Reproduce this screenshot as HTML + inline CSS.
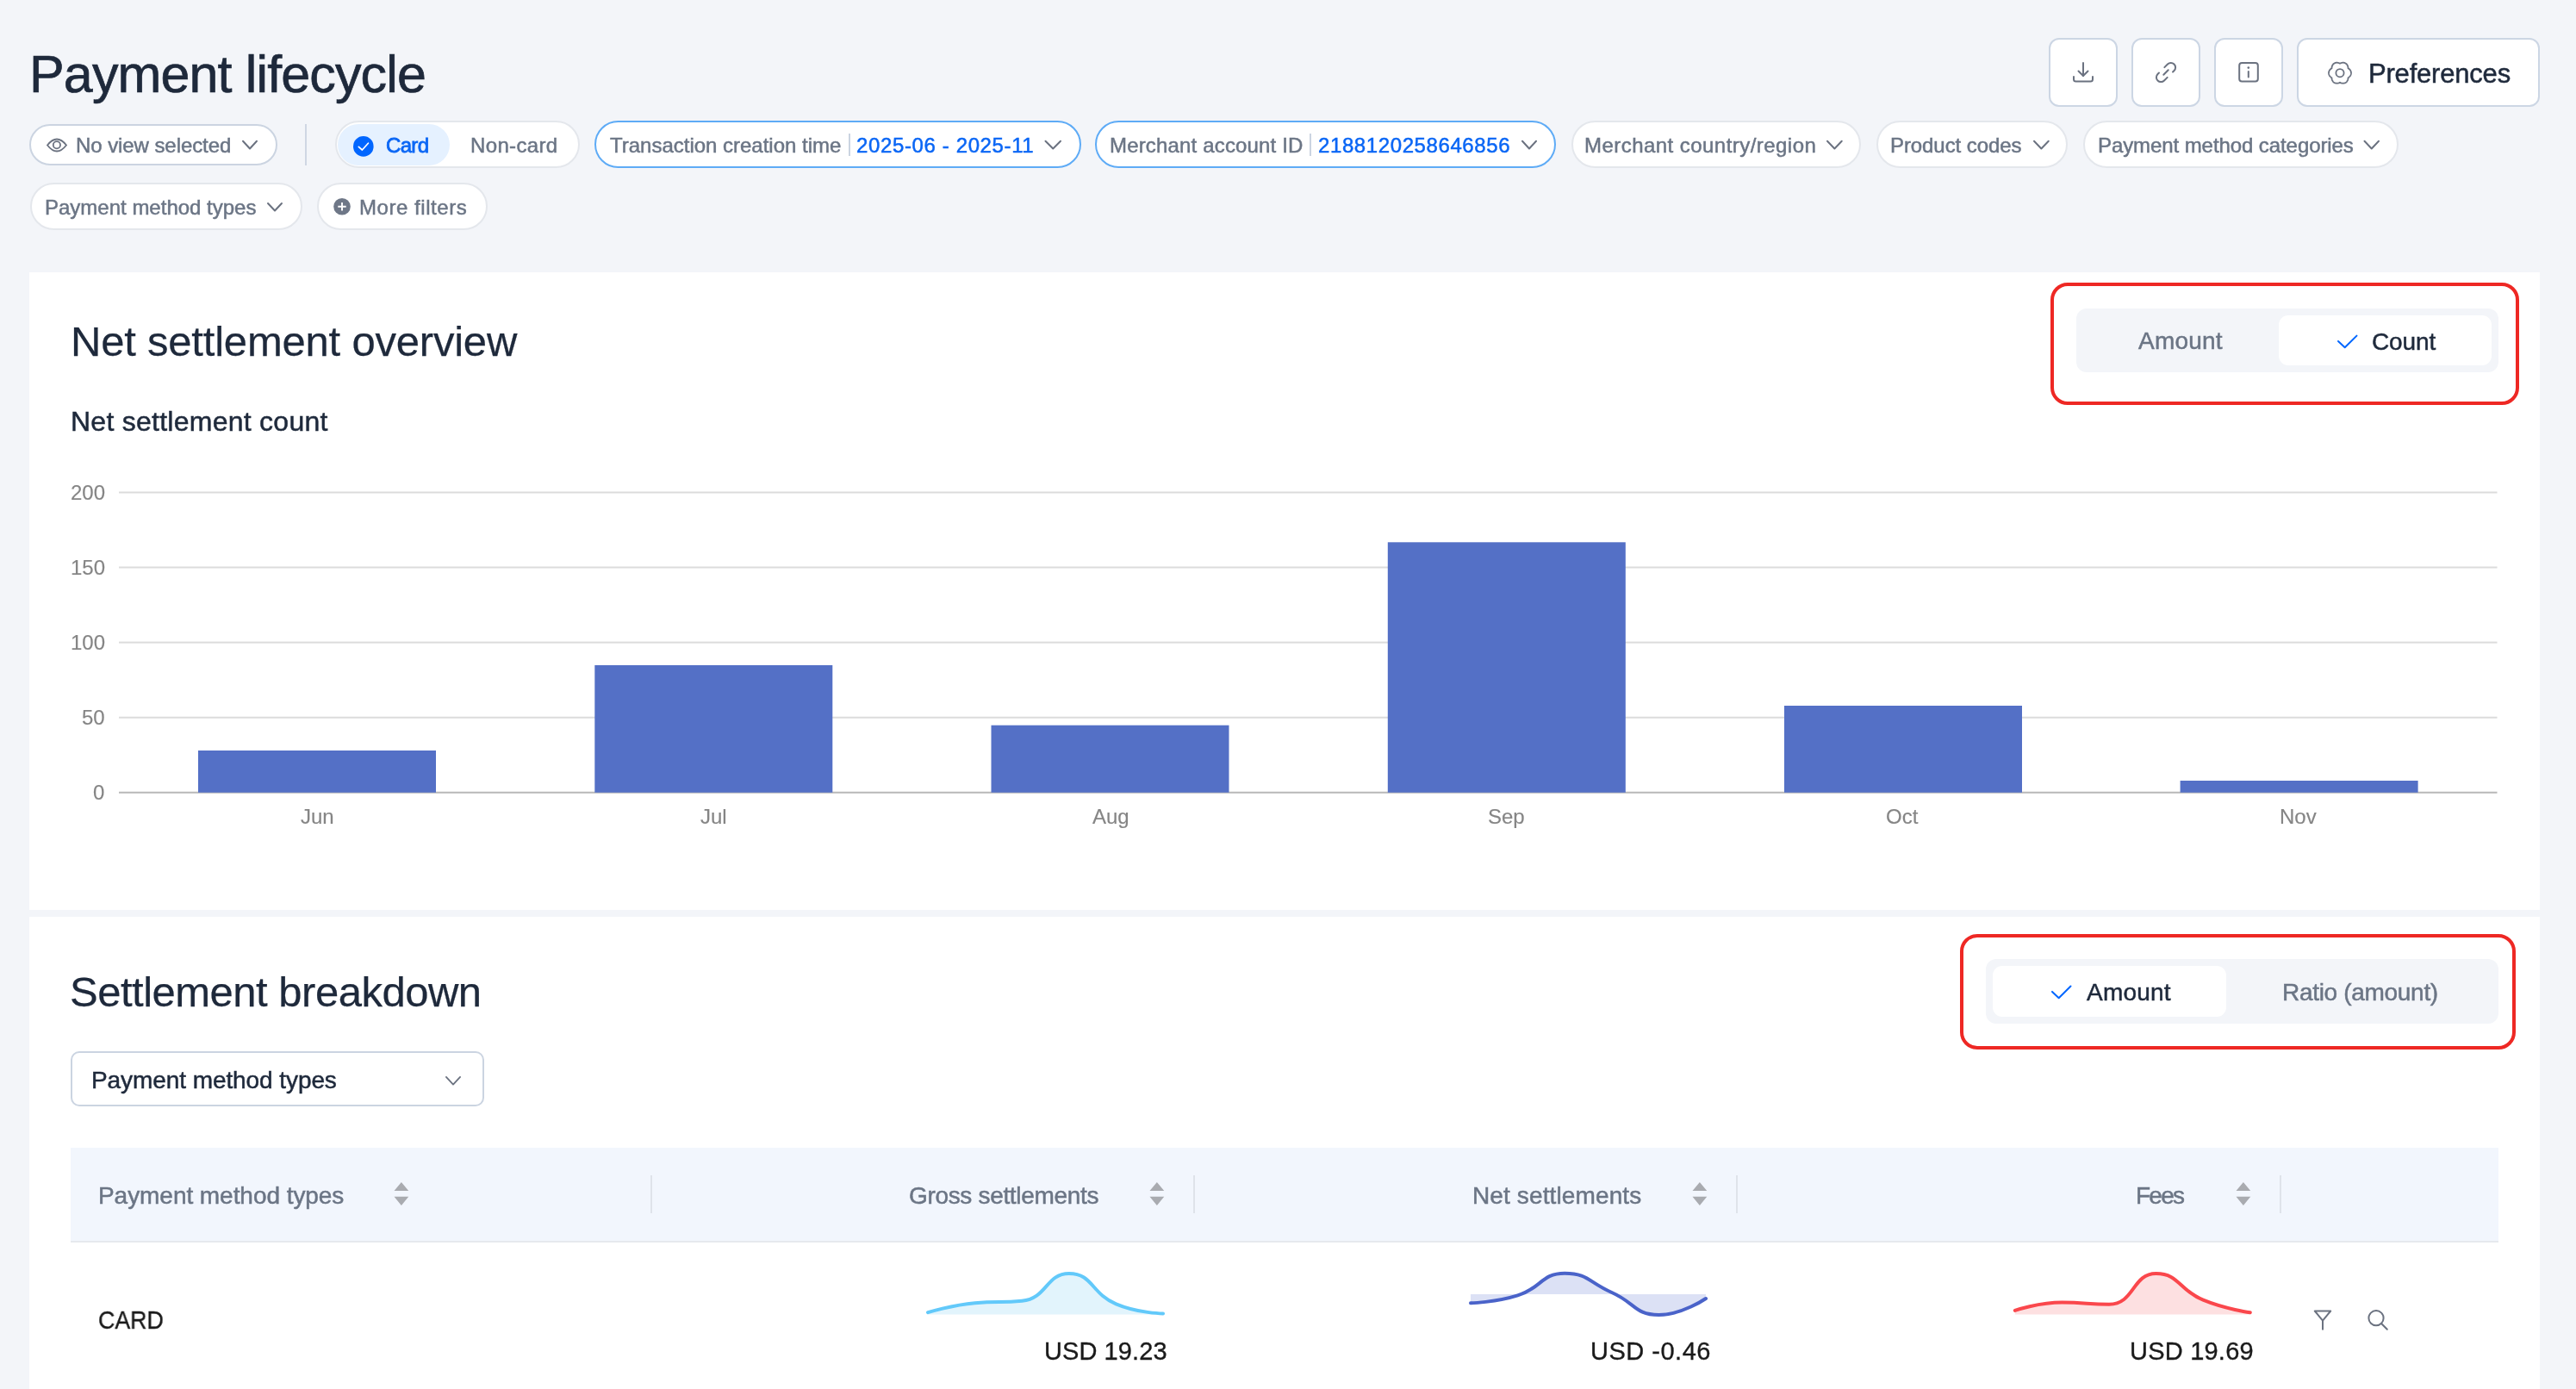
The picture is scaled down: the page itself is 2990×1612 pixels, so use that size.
<!DOCTYPE html>
<html><head><meta charset="utf-8"><title>Payment lifecycle</title>
<style>
html,body{margin:0;padding:0;}
body{width:2990px;height:1612px;position:relative;overflow:hidden;background:#f3f5f9;font-family:"Liberation Sans",sans-serif;}
.t{position:absolute;white-space:nowrap;font-family:"Liberation Sans",sans-serif;will-change:transform;}
.b{position:absolute;box-sizing:border-box;}
svg{position:absolute;left:0;top:0;}
</style></head><body>
<!-- header buttons -->
<div class="b" style="left:2378px;top:44px;width:80px;height:80px;background:#fff;border:2px solid #ccd6e4;border-radius:12px"></div>
<div class="b" style="left:2474px;top:44px;width:80px;height:80px;background:#fff;border:2px solid #ccd6e4;border-radius:12px"></div>
<div class="b" style="left:2570px;top:44px;width:80px;height:80px;background:#fff;border:2px solid #ccd6e4;border-radius:12px"></div>
<div class="b" style="left:2666px;top:44px;width:281.5px;height:80px;background:#fff;border:2px solid #ccd6e4;border-radius:12px"></div>
<!-- filter row 1 -->
<div class="b" style="left:34px;top:144px;width:288px;height:47.6px;background:#fff;border:2px solid #cbd4e1;border-radius:24px"></div>
<div class="b" style="left:354px;top:144px;width:2px;height:48px;background:#cfd7e3"></div>
<div class="b" style="left:388.5px;top:140px;width:284.5px;height:55px;background:#fff;border:2px solid #e4e7ec;border-radius:27.5px"></div>
<div class="b" style="left:391.5px;top:143.5px;width:130.5px;height:48.5px;background:#e5f1ff;border-radius:24px"></div>
<div class="b" style="left:690px;top:140px;width:565px;height:55px;background:#fff;border:2px solid #5eabf6;border-radius:27.5px"></div>
<div class="b" style="left:985px;top:155px;width:2px;height:26px;background:#cbd4e1"></div>
<div class="b" style="left:1271px;top:140px;width:535px;height:55px;background:#fff;border:2px solid #5eabf6;border-radius:27.5px"></div>
<div class="b" style="left:1520px;top:155px;width:2px;height:26px;background:#cbd4e1"></div>
<div class="b" style="left:1823.5px;top:140px;width:336.5px;height:55px;background:#fff;border:2px solid #e4e7ec;border-radius:27.5px"></div>
<div class="b" style="left:2177.5px;top:140px;width:222.5px;height:55px;background:#fff;border:2px solid #e4e7ec;border-radius:27.5px"></div>
<div class="b" style="left:2418px;top:140px;width:366px;height:55px;background:#fff;border:2px solid #e4e7ec;border-radius:27.5px"></div>
<!-- filter row 2 -->
<div class="b" style="left:34.5px;top:212px;width:316px;height:55px;background:#fff;border:2px solid #e4e7ec;border-radius:27.5px"></div>
<div class="b" style="left:367.5px;top:212px;width:198.5px;height:55px;background:#fff;border:2px solid #e4e7ec;border-radius:27.5px"></div>
<!-- cards -->
<div class="b" style="left:34px;top:316px;width:2914px;height:740px;background:#fff"></div>
<div class="b" style="left:34px;top:1064px;width:2914px;height:560px;background:#fff"></div>
<!-- red boxes & segmented -->
<div class="b" style="left:2380px;top:328px;width:543.5px;height:141.5px;border:4px solid #ee2824;border-radius:20px"></div>
<div class="b" style="left:2410px;top:358px;width:490px;height:74px;background:#f3f5f9;border-radius:12px"></div>
<div class="b" style="left:2645px;top:366px;width:247px;height:58px;background:#fff;border-radius:11px"></div>
<div class="b" style="left:2274.5px;top:1084px;width:645.5px;height:133.5px;border:4px solid #ee2824;border-radius:20px"></div>
<div class="b" style="left:2304.5px;top:1113px;width:595.5px;height:74.5px;background:#f3f5f9;border-radius:12px"></div>
<div class="b" style="left:2313px;top:1121px;width:271px;height:59px;background:#fff;border-radius:11px"></div>
<!-- dropdown -->
<div class="b" style="left:82px;top:1220px;width:480px;height:63.5px;background:#fff;border:2px solid #cbd4e1;border-radius:10px"></div>
<!-- table header -->
<div class="b" style="left:82px;top:1332px;width:2818px;height:110px;background:#f2f6fd;border-bottom:2px solid #e6e9ee"></div>
<div class="b" style="left:755px;top:1363.5px;width:2px;height:44px;background:#dfe3ea"></div>
<div class="b" style="left:1385px;top:1363.5px;width:2px;height:44px;background:#dfe3ea"></div>
<div class="b" style="left:2015px;top:1363.5px;width:2px;height:44px;background:#dfe3ea"></div>
<div class="b" style="left:2646px;top:1363.5px;width:2px;height:44px;background:#dfe3ea"></div>
<svg width="2990" height="1612" viewBox="0 0 2990 1612">
<rect x="138" y="570.50" width="2760.5" height="2" fill="#dcdcdc"/><rect x="138" y="657.50" width="2760.5" height="2" fill="#dcdcdc"/><rect x="138" y="744.60" width="2760.5" height="2" fill="#dcdcdc"/><rect x="138" y="831.70" width="2760.5" height="2" fill="#dcdcdc"/><rect x="138" y="918.75" width="2760.5" height="2" fill="#b8b8b8"/><rect x="230" y="871" width="276" height="48.75" fill="#5470c6"/><rect x="690.3" y="772" width="276" height="147.75" fill="#5470c6"/><rect x="1150.5" y="841.7" width="276" height="78.05" fill="#5470c6"/><rect x="1610.8" y="629.3" width="276" height="290.45" fill="#5470c6"/><rect x="2071" y="819" width="276" height="100.75" fill="#5470c6"/><rect x="2530.6" y="906" width="276" height="13.75" fill="#5470c6"/>
<g fill="none" stroke="#6b7280" stroke-width="2" stroke-linecap="round" stroke-linejoin="round"><path d="M2418 73 V88"/><path d="M2412.5 82.5 L2418 88 L2423.5 82.5"/><path d="M2407 89 V92 Q2407 94.5 2409.5 94.5 H2426.5 Q2429 94.5 2429 92 V89"/></g><g fill="none" stroke="#6b7280" stroke-width="1.87" stroke-linecap="round" stroke-linejoin="round" transform="translate(2514 84) rotate(-45) scale(1.07)"><path d="M2.8 -5 H7.6 A5 5 0 0 1 7.6 5 H5.6"/><path d="M-2.8 5 H-7.6 A5 5 0 0 1 -7.6 -5 H-5.6"/><path d="M-3.6 0 H3.6"/></g><g fill="none" stroke="#6b7280" stroke-width="2" stroke-linecap="round"><rect x="2599.2" y="73" width="21.6" height="21.4" rx="3"/><path d="M2609.8 83 V89.5"/></g><circle cx="2609.8" cy="78.6" r="1.3" fill="#6b7280"/><path d="M2729.00 84.70 L2728.98 85.15 L2728.92 85.60 L2728.83 86.05 L2728.70 86.49 L2728.54 86.91 L2728.34 87.32 L2728.12 87.72 L2727.86 88.10 L2727.58 88.46 L2727.28 88.80 L2726.95 89.13 L2726.61 89.43 L2726.26 89.70 L2725.90 89.96 L2725.53 90.20 L2725.51 90.64 L2725.46 91.08 L2725.40 91.53 L2725.31 91.97 L2725.19 92.41 L2725.05 92.85 L2724.88 93.27 L2724.67 93.68 L2724.44 94.08 L2724.18 94.45 L2723.90 94.81 L2723.58 95.14 L2723.25 95.44 L2722.88 95.72 L2722.50 95.96 L2722.10 96.17 L2721.68 96.35 L2721.25 96.49 L2720.81 96.59 L2720.35 96.66 L2719.90 96.70 L2719.44 96.70 L2718.98 96.67 L2718.53 96.61 L2718.08 96.52 L2717.64 96.40 L2717.21 96.25 L2716.80 96.09 L2716.39 95.90 L2716.00 95.70 L2715.61 95.90 L2715.20 96.09 L2714.79 96.25 L2714.36 96.40 L2713.92 96.52 L2713.47 96.61 L2713.02 96.67 L2712.56 96.70 L2712.10 96.70 L2711.65 96.66 L2711.19 96.59 L2710.75 96.49 L2710.32 96.35 L2709.90 96.17 L2709.50 95.96 L2709.12 95.72 L2708.75 95.44 L2708.42 95.14 L2708.10 94.81 L2707.82 94.45 L2707.56 94.08 L2707.33 93.68 L2707.12 93.27 L2706.95 92.85 L2706.81 92.41 L2706.69 91.97 L2706.60 91.53 L2706.54 91.08 L2706.49 90.64 L2706.47 90.20 L2706.10 89.96 L2705.74 89.70 L2705.39 89.43 L2705.05 89.13 L2704.72 88.80 L2704.42 88.46 L2704.14 88.10 L2703.88 87.72 L2703.66 87.32 L2703.46 86.91 L2703.30 86.49 L2703.17 86.05 L2703.08 85.60 L2703.02 85.15 L2703.00 84.70 L2703.02 84.25 L2703.08 83.80 L2703.17 83.35 L2703.30 82.91 L2703.46 82.49 L2703.66 82.08 L2703.88 81.68 L2704.14 81.30 L2704.42 80.94 L2704.72 80.60 L2705.05 80.27 L2705.39 79.97 L2705.74 79.70 L2706.10 79.44 L2706.47 79.20 L2706.49 78.76 L2706.54 78.32 L2706.60 77.87 L2706.69 77.43 L2706.81 76.99 L2706.95 76.55 L2707.12 76.13 L2707.33 75.72 L2707.56 75.32 L2707.82 74.95 L2708.10 74.59 L2708.42 74.26 L2708.75 73.96 L2709.12 73.68 L2709.50 73.44 L2709.90 73.23 L2710.32 73.05 L2710.75 72.91 L2711.19 72.81 L2711.65 72.74 L2712.10 72.70 L2712.56 72.70 L2713.02 72.73 L2713.47 72.79 L2713.92 72.88 L2714.36 73.00 L2714.79 73.15 L2715.20 73.31 L2715.61 73.50 L2716.00 73.70 L2716.39 73.50 L2716.80 73.31 L2717.21 73.15 L2717.64 73.00 L2718.08 72.88 L2718.53 72.79 L2718.98 72.73 L2719.44 72.70 L2719.90 72.70 L2720.35 72.74 L2720.81 72.81 L2721.25 72.91 L2721.68 73.05 L2722.10 73.23 L2722.50 73.44 L2722.88 73.68 L2723.25 73.96 L2723.58 74.26 L2723.90 74.59 L2724.18 74.95 L2724.44 75.32 L2724.67 75.72 L2724.88 76.13 L2725.05 76.55 L2725.19 76.99 L2725.31 77.43 L2725.40 77.87 L2725.46 78.32 L2725.51 78.76 L2725.53 79.20 L2725.90 79.44 L2726.26 79.70 L2726.61 79.97 L2726.95 80.27 L2727.28 80.60 L2727.58 80.94 L2727.86 81.30 L2728.12 81.68 L2728.34 82.08 L2728.54 82.49 L2728.70 82.91 L2728.83 83.35 L2728.92 83.80 L2728.98 84.25 L2729.00 84.70 Z" fill="none" stroke="#6b7280" stroke-width="1.8"/><circle cx="2716" cy="84.7" r="4.6" fill="none" stroke="#6b7280" stroke-width="1.8"/><g fill="none" stroke="#6b7280" stroke-width="1.8"><path d="M55 168.5 Q66 154.5 77 168.5 Q66 182.5 55 168.5 Z"/><circle cx="65.9" cy="168.3" r="4.1"/></g><path d="M282.00 163.80 L290.00 172.50 L298.00 163.80" fill="none" stroke="#6b7280" stroke-width="2" stroke-linecap="round" stroke-linejoin="round"/><path d="M1213.50 163.80 L1222.25 172.50 L1231.00 163.80" fill="none" stroke="#6b7280" stroke-width="2" stroke-linecap="round" stroke-linejoin="round"/><path d="M1767.00 163.80 L1775.00 172.50 L1783.00 163.80" fill="none" stroke="#6b7280" stroke-width="2" stroke-linecap="round" stroke-linejoin="round"/><path d="M2121.00 163.80 L2129.38 172.50 L2137.75 163.80" fill="none" stroke="#6b7280" stroke-width="2" stroke-linecap="round" stroke-linejoin="round"/><path d="M2361.00 163.80 L2369.38 172.50 L2377.75 163.80" fill="none" stroke="#6b7280" stroke-width="2" stroke-linecap="round" stroke-linejoin="round"/><path d="M2744.50 163.80 L2752.75 172.50 L2761.00 163.80" fill="none" stroke="#6b7280" stroke-width="2" stroke-linecap="round" stroke-linejoin="round"/><path d="M311.00 236.00 L319.00 244.50 L327.00 236.00" fill="none" stroke="#6b7280" stroke-width="2" stroke-linecap="round" stroke-linejoin="round"/><circle cx="421.8" cy="169.9" r="11.8" fill="#0066ff"/><path d="M416.3 170.3 L420.4 174 L427.4 166.2" fill="none" stroke="#fff" stroke-width="1.7" stroke-linecap="round" stroke-linejoin="round"/><circle cx="397" cy="239.8" r="9.8" fill="#6e7787"/><path d="M397 235.1 V244.5 M392.3 239.8 H401.7" stroke="#fff" stroke-width="1.9"/><path d="M2714 396 L2721.7 403.2 L2735.5 389.6" fill="none" stroke="#0066ff" stroke-width="2" stroke-linecap="round" stroke-linejoin="round"/><path d="M2382 1150.9 L2389.7 1158.2 L2403.5 1144.5" fill="none" stroke="#0066ff" stroke-width="2" stroke-linecap="round" stroke-linejoin="round"/><path d="M517.90 1249.90 L526.00 1258.60 L534.10 1249.90" fill="none" stroke="#6b7280" stroke-width="1.8" stroke-linecap="round" stroke-linejoin="round"/><path d="M457.50 1382 L465.88 1372 L474.25 1382 Z M457.50 1388.8 L465.88 1399 L474.25 1388.8 Z" fill="#a9abb0"/><path d="M1334.50 1382 L1342.88 1372 L1351.25 1382 Z M1334.50 1388.8 L1342.88 1399 L1351.25 1388.8 Z" fill="#a9abb0"/><path d="M1964.50 1382 L1972.88 1372 L1981.25 1382 Z M1964.50 1388.8 L1972.88 1399 L1981.25 1388.8 Z" fill="#a9abb0"/><path d="M2595.50 1382 L2603.88 1372 L2612.25 1382 Z M2595.50 1388.8 L2603.88 1399 L2612.25 1388.8 Z" fill="#a9abb0"/><g fill="none" stroke="#6b7280" stroke-width="2" stroke-linejoin="round"><path d="M2686.8 1521.5 H2705.2 L2696 1532.6 Z"/><path d="M2696 1532.6 V1543.5"/><circle cx="2758" cy="1529.7" r="8.6"/><path d="M2764.3 1536.2 L2770.8 1542.7" stroke-linecap="round"/></g><path d="M1077.00 1523.20 C1077.00 1523.20 1104.04 1514.65 1131.60 1512.20 C1158.64 1509.80 1160.88 1512.20 1186.20 1509.80 C1215.48 1507.03 1213.89 1478.00 1240.80 1478.00 C1268.49 1478.00 1266.00 1500.81 1295.40 1513.30 C1320.60 1524.01 1350.00 1524.40 1350.00 1524.40 L1350.00 1525.5 L1077.00 1525.5 Z" fill="#e2f4fc"/><path d="M1077.00 1523.20 C1077.00 1523.20 1104.04 1514.65 1131.60 1512.20 C1158.64 1509.80 1160.88 1512.20 1186.20 1509.80 C1215.48 1507.03 1213.89 1478.00 1240.80 1478.00 C1268.49 1478.00 1266.00 1500.81 1295.40 1513.30 C1320.60 1524.01 1350.00 1524.40 1350.00 1524.40" fill="none" stroke="#62c9fa" stroke-width="4" stroke-linecap="round" stroke-linejoin="round"/><path d="M1707.00 1512.20 C1707.00 1512.20 1735.48 1511.63 1761.60 1503.40 C1790.08 1494.43 1788.59 1477.80 1816.20 1477.80 C1843.19 1477.80 1843.85 1488.10 1870.80 1500.00 C1898.45 1512.20 1897.49 1526.00 1925.40 1526.00 C1952.09 1526.00 1980.00 1507.00 1980.00 1507.00 L1980.00 1502 L1707.00 1502 Z" fill="#dce1f5"/><path d="M1707.00 1512.20 C1707.00 1512.20 1735.48 1511.63 1761.60 1503.40 C1790.08 1494.43 1788.59 1477.80 1816.20 1477.80 C1843.19 1477.80 1843.85 1488.10 1870.80 1500.00 C1898.45 1512.20 1897.49 1526.00 1925.40 1526.00 C1952.09 1526.00 1980.00 1507.00 1980.00 1507.00" fill="none" stroke="#4a63c9" stroke-width="4" stroke-linecap="round" stroke-linejoin="round"/><path d="M2338.80 1520.90 C2338.80 1520.90 2365.91 1511.60 2393.40 1511.60 C2420.51 1511.60 2423.11 1513.70 2448.00 1513.70 C2477.71 1513.70 2474.75 1478.00 2502.60 1478.00 C2529.35 1478.00 2528.49 1496.82 2557.20 1508.70 C2583.09 1519.42 2611.80 1523.20 2611.80 1523.20 L2611.80 1525.5 L2338.80 1525.5 Z" fill="#fde0e1"/><path d="M2338.80 1520.90 C2338.80 1520.90 2365.91 1511.60 2393.40 1511.60 C2420.51 1511.60 2423.11 1513.70 2448.00 1513.70 C2477.71 1513.70 2474.75 1478.00 2502.60 1478.00 C2529.35 1478.00 2528.49 1496.82 2557.20 1508.70 C2583.09 1519.42 2611.80 1523.20 2611.80 1523.20" fill="none" stroke="#fa474c" stroke-width="4" stroke-linecap="round" stroke-linejoin="round"/>
</svg>
<div class="t" style="left:33.75px;top:56.00px;font-size:61px;line-height:61px;letter-spacing:-0.863px;color:#1e293b;-webkit-text-stroke:0.70px #1e293b">Payment lifecycle</div><div class="t" style="left:2749.00px;top:70.00px;font-size:31px;line-height:31px;letter-spacing:-0.200px;color:#1e293b;-webkit-text-stroke:0.50px #1e293b">Preferences</div><div class="t" style="left:87.75px;top:157.00px;font-size:24px;line-height:24px;letter-spacing:-0.073px;color:#6b7585;-webkit-text-stroke:0.50px #6b7585">No view selected</div><div class="t" style="left:447.80px;top:157.00px;font-size:24px;line-height:24px;letter-spacing:-0.667px;color:#0a66f5;-webkit-text-stroke:0.80px #0a66f5">Card</div><div class="t" style="left:546.25px;top:157.00px;font-size:24px;line-height:24px;letter-spacing:0.357px;color:#6b7585;-webkit-text-stroke:0.50px #6b7585">Non-card</div><div class="t" style="left:708.00px;top:157.00px;font-size:24px;line-height:24px;letter-spacing:-0.010px;color:#6b7585;-webkit-text-stroke:0.50px #6b7585">Transaction creation time</div><div class="t" style="left:994.00px;top:157.00px;font-size:24px;line-height:24px;letter-spacing:0.625px;color:#0a66f5;-webkit-text-stroke:0.50px #0a66f5">2025-06 - 2025-11</div><div class="t" style="left:1287.50px;top:157.00px;font-size:24px;line-height:24px;letter-spacing:0.167px;color:#6b7585;-webkit-text-stroke:0.50px #6b7585">Merchant account ID</div><div class="t" style="left:1530.00px;top:157.00px;font-size:24px;line-height:24px;letter-spacing:0.600px;color:#0a66f5;-webkit-text-stroke:0.50px #0a66f5">2188120258646856</div><div class="t" style="left:1839.00px;top:157.00px;font-size:24px;line-height:24px;letter-spacing:0.455px;color:#6b7585;-webkit-text-stroke:0.50px #6b7585">Merchant country/region</div><div class="t" style="left:2194.00px;top:157.00px;font-size:24px;line-height:24px;letter-spacing:-0.083px;color:#6b7585;-webkit-text-stroke:0.50px #6b7585">Product codes</div><div class="t" style="left:2435.00px;top:157.00px;font-size:24px;line-height:24px;letter-spacing:-0.083px;color:#6b7585;-webkit-text-stroke:0.50px #6b7585">Payment method categories</div><div class="t" style="left:52.25px;top:229.00px;font-size:24px;line-height:24px;letter-spacing:0.000px;color:#6b7585;-webkit-text-stroke:0.50px #6b7585">Payment method types</div><div class="t" style="left:417.00px;top:229.00px;font-size:24px;line-height:24px;letter-spacing:0.545px;color:#6b7585;-webkit-text-stroke:0.50px #6b7585">More filters</div><div class="t" style="left:81.90px;top:372.00px;font-size:49px;line-height:49px;letter-spacing:-0.209px;color:#1e293b;-webkit-text-stroke:0.25px #1e293b">Net settlement overview</div><div class="t" style="left:2482.00px;top:382.00px;font-size:28px;line-height:28px;letter-spacing:0.200px;color:#6b7585;-webkit-text-stroke:0.50px #6b7585">Amount</div><div class="t" style="left:2752.50px;top:383.00px;font-size:28px;line-height:28px;letter-spacing:-0.125px;color:#1e293b;-webkit-text-stroke:0.50px #1e293b">Count</div><div class="t" style="left:81.75px;top:473.00px;font-size:32px;line-height:32px;letter-spacing:0.258px;color:#1e293b;-webkit-text-stroke:0.50px #1e293b">Net settlement count</div><div class="t" style="left:81.40px;top:1127.00px;font-size:49px;line-height:49px;letter-spacing:-0.500px;color:#1e293b;-webkit-text-stroke:0.25px #1e293b">Settlement breakdown</div><div class="t" style="left:2422.00px;top:1138.00px;font-size:28px;line-height:28px;letter-spacing:0.200px;color:#1e293b;-webkit-text-stroke:0.50px #1e293b">Amount</div><div class="t" style="left:2648.50px;top:1138.00px;font-size:28px;line-height:28px;letter-spacing:-0.308px;color:#6b7585;-webkit-text-stroke:0.50px #6b7585">Ratio (amount)</div><div class="t" style="left:105.50px;top:1240.00px;font-size:28px;line-height:28px;letter-spacing:-0.079px;color:#1e293b;-webkit-text-stroke:0.50px #1e293b">Payment method types</div><div class="t" style="left:114.00px;top:1374.00px;font-size:28px;line-height:28px;letter-spacing:-0.053px;color:#6b7585;-webkit-text-stroke:0.50px #6b7585">Payment method types</div><div class="t" style="left:1054.50px;top:1374.00px;font-size:28px;line-height:28px;letter-spacing:-0.328px;color:#6b7585;-webkit-text-stroke:0.50px #6b7585">Gross settlements</div><div class="t" style="left:1708.75px;top:1374.00px;font-size:28px;line-height:28px;letter-spacing:0.125px;color:#6b7585;-webkit-text-stroke:0.50px #6b7585">Net settlements</div><div class="t" style="left:2479.25px;top:1374.00px;font-size:28px;line-height:28px;letter-spacing:-1.750px;color:#6b7585;-webkit-text-stroke:0.50px #6b7585">Fees</div><div class="t" style="left:114.33px;top:1518.00px;font-size:29px;line-height:29px;letter-spacing:0.000px;color:#1a1a1a;-webkit-text-stroke:0.35px #1a1a1a;transform:scaleX(0.9219);transform-origin:0 0">CARD</div><div class="t" style="left:1212.10px;top:1554.00px;font-size:29px;line-height:29px;letter-spacing:0.081px;color:#1a1a1a;-webkit-text-stroke:0.35px #1a1a1a">USD 19.23</div><div class="t" style="left:1846.25px;top:1554.00px;font-size:29px;line-height:29px;letter-spacing:0.500px;color:#1a1a1a;-webkit-text-stroke:0.35px #1a1a1a">USD -0.46</div><div class="t" style="left:2472.25px;top:1554.00px;font-size:29px;line-height:29px;letter-spacing:0.219px;color:#1a1a1a;-webkit-text-stroke:0.35px #1a1a1a">USD 19.69</div><div class="t" style="left:82.40px;top:560.00px;font-size:24px;line-height:24px;letter-spacing:0.000px;color:#858585;-webkit-text-stroke:0.15px #858585">200</div><div class="t" style="left:82.40px;top:647.00px;font-size:24px;line-height:24px;letter-spacing:0.000px;color:#858585;-webkit-text-stroke:0.15px #858585">150</div><div class="t" style="left:82.40px;top:734.00px;font-size:24px;line-height:24px;letter-spacing:0.000px;color:#858585;-webkit-text-stroke:0.15px #858585">100</div><div class="t" style="left:95.40px;top:821.00px;font-size:24px;line-height:24px;letter-spacing:0.000px;color:#858585;-webkit-text-stroke:0.15px #858585">50</div><div class="t" style="left:108.40px;top:908.00px;font-size:24px;line-height:24px;letter-spacing:0.000px;color:#858585;-webkit-text-stroke:0.15px #858585">0</div><div class="t" style="left:349.00px;top:936.00px;font-size:24px;line-height:24px;letter-spacing:0.000px;color:#858585;-webkit-text-stroke:0.15px #858585">Jun</div><div class="t" style="left:813.00px;top:936.00px;font-size:24px;line-height:24px;letter-spacing:0.000px;color:#858585;-webkit-text-stroke:0.15px #858585">Jul</div><div class="t" style="left:1267.50px;top:936.00px;font-size:24px;line-height:24px;letter-spacing:0.000px;color:#858585;-webkit-text-stroke:0.15px #858585">Aug</div><div class="t" style="left:1726.50px;top:936.00px;font-size:24px;line-height:24px;letter-spacing:0.000px;color:#858585;-webkit-text-stroke:0.15px #858585">Sep</div><div class="t" style="left:2189.00px;top:936.00px;font-size:24px;line-height:24px;letter-spacing:0.000px;color:#858585;-webkit-text-stroke:0.15px #858585">Oct</div><div class="t" style="left:2645.50px;top:936.00px;font-size:24px;line-height:24px;letter-spacing:0.000px;color:#858585;-webkit-text-stroke:0.15px #858585">Nov</div>
</body></html>
